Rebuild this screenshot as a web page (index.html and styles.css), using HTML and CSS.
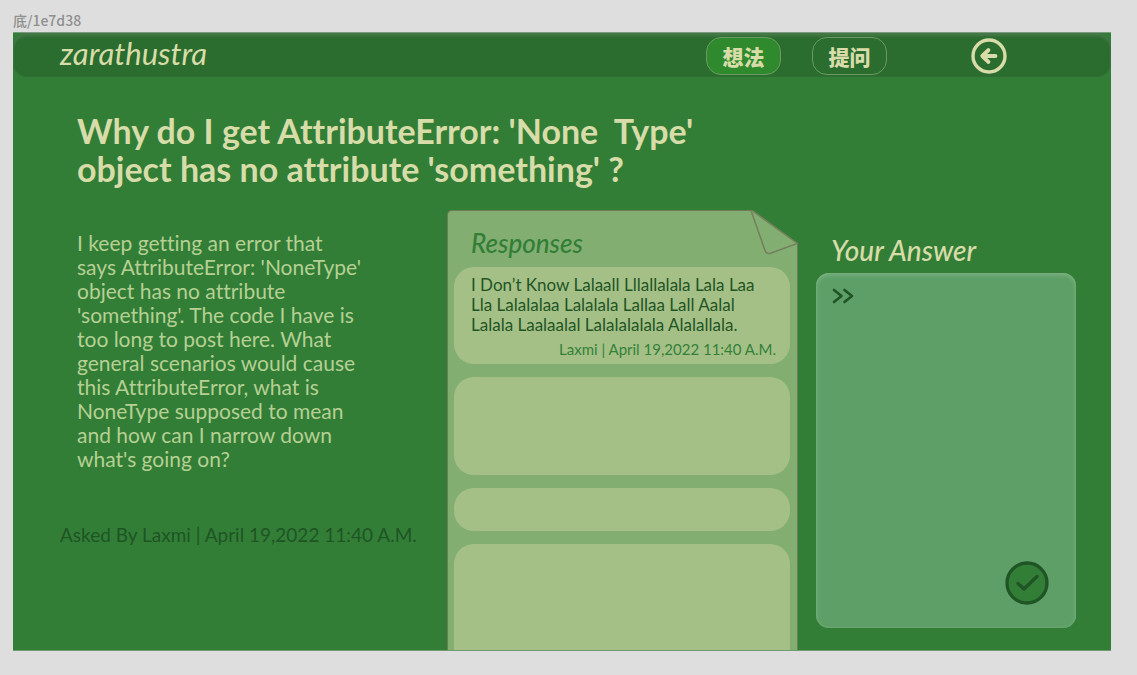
FILE: index.html
```html
<!DOCTYPE html>
<html lang="en">
<head>
<meta charset="utf-8">
<meta name="viewport" content="width=device-width, initial-scale=1">
<title>zarathustra</title>
<link rel="stylesheet" href="styles.css">
</head>
<body>
<p class="frame-label" lang="zh-CN">底/1e7d38</p>
<div class="frame">
  <header class="topbar">
    <a class="brand" href="#">zarathustra</a>
    <nav class="nav">
      <button class="pill pill-active" type="button" lang="zh-CN">想法</button>
      <button class="pill" type="button" lang="zh-CN">提问</button>
      <button class="back" type="button" aria-label="Back">
        <svg viewBox="0 0 36 36" width="36" height="36" fill="none" stroke="currentColor" stroke-width="3.4" stroke-linecap="round" stroke-linejoin="round"><circle cx="18" cy="18" r="16"/><path d="M11.500 18H24.500M17.500 12L11.200 18L17.500 24" stroke-width="3.800"/></svg>
      </button>
    </nav>
  </header>
  <main class="page">
    <h1 class="title">Why do I get AttributeError: 'None&nbsp; Type'<br>object has no attribute 'something' ?</h1>
    <div class="columns">
      <section class="question">
        <p class="question-text">I keep getting an error that<br>says AttributeError: 'NoneType'<br>object has no attribute<br>'something'. The code I have is<br>too long to post here. What<br>general scenarios would cause<br>this AttributeError, what is<br>NoneType supposed to mean<br>and how can I narrow down<br>what's going on?</p>
        <p class="question-meta">Asked By Laxmi | April 19,2022 11:40 A.M.</p>
      </section>
      <section class="paper">
        <svg class="fold" viewBox="0 0 48 46" width="48" height="46" aria-hidden="true"><path class="fold-gap" d="M2 0H48V33.500Z"/><path class="fold-line" d="M1 .5H2L47.500 33.500L20.500 43.200Q16.500 44.500 15 40.500Z"/></svg>
        <h2 class="script paper-title">Responses</h2>
        <article class="card card-text">
          <p class="response">I Don’t Know Lalaall Lllallalala Lala Laa<br>Lla Lalalalaa Lalalala Lallaa Lall Aalal<br>Lalala Laalaalal Lalalalalala Alalallala.</p>
          <p class="response-meta">Laxmi | April 19,2022 11:40 A.M.</p>
        </article>
        <article class="card card-tall"></article>
        <article class="card card-short"></article>
        <article class="card card-last"></article>
      </section>
      <form class="answer">
        <label class="script answer-title" for="answer">Your Answer</label>
        <div class="answer-box">
          <svg class="prompt" viewBox="0 0 22 16" width="22" height="16" fill="none" stroke="currentColor" stroke-width="2.600" stroke-linecap="round" stroke-linejoin="round" aria-hidden="true"><path d="M2 2L9.500 8L2 14M12.500 2L20 8L12.500 14"/></svg>
          <textarea class="answer-input" id="answer"></textarea>
          <button class="submit" type="button" aria-label="Submit answer">
            <svg viewBox="0 0 44 44" width="44" height="44" fill="none" stroke="currentColor" stroke-width="3.300" stroke-linecap="round" stroke-linejoin="round"><circle class="submit-disc" cx="22" cy="22" r="20"/><path d="M13 22.500L19 28L32 15.500"/></svg>
          </button>
        </div>
      </form>
    </div>
  </main>
</div>
</body>
</html>
```

FILE: styles.css
```css
:root {
  --green: #327e37;
  --bar: #2b6c2f;
  --cream: #d7dca8;
  --dark: #1f5425;
}

* { box-sizing: border-box; }

body {
  margin: 0;
  min-height: 100vh;
  display: flex;
  flex-direction: column;
  padding: 8px 26px 24px 13px;
  background: #dedede;
  font-family: Lato, "Noto Sans CJK SC", sans-serif;
  font-variant-ligatures: none;
}

h1, h2, p { margin: 0; }

button {
  font: inherit;
  color: inherit;
  cursor: pointer;
}

svg { display: block; }

.frame-label {
  height: 24px;
  font: 500 14px/24px "Noto Sans CJK SC", sans-serif;
  color: #8f8f8f;
}

.frame {
  flex: 1;
  display: flex;
  flex-direction: column;
  background: var(--green);
  border-top: 1px solid #7b9a7d;
  border-bottom: 1px solid #6f9a72;
}

.topbar {
  display: flex;
  align-items: center;
  justify-content: space-between;
  height: 44px;
  padding: 0 104px 0 47px;
  border-radius: 14px;
  background: var(--bar);
  box-shadow: inset 0 3px 3px #47794b, inset 0 0 2px #3c7640;
  color: var(--cream);
}

.brand {
  font-size: 31px;
  font-style: italic;
  line-height: 36px;
  padding-bottom: 4px;
  color: inherit;
  text-decoration: none;
}

.nav {
  display: flex;
  align-items: center;
  padding-top: 2px;
}

.pill {
  width: 75px;
  height: 38px;
  margin-right: 31px;
  padding: 0;
  border: 1px solid #6c9a62;
  border-radius: 15px;
  background: none;
  font: 900 21px/32px "Noto Sans CJK SC", sans-serif;
}

.pill-active {
  background: #2f8a2d;
}

.back {
  margin-left: 53px;
  padding: 0;
  border: 0;
  background: none;
}

.page {
  flex: 1;
  display: flex;
  flex-direction: column;
  padding: 35px 35px 0 47px;
}

.title {
  padding-left: 17px;
  font-size: 34px;
  font-weight: 700;
  line-height: 38px;
  color: var(--cream);
}

.columns {
  flex: 1;
  display: grid;
  grid-template-columns: 369fr 351fr 260fr;
  gap: 18px;
  padding-top: 22px;
}

.question { padding-top: 21px; }

.question-text {
  padding-left: 17px;
  font-size: 21px;
  line-height: 24px;
  color: #b6d093;
  white-space: nowrap;
}

.question-meta {
  margin-top: 52px;
  font-size: 19px;
  line-height: 24px;
  color: var(--dark);
  white-space: nowrap;
}

.script {
  font-style: italic;
  font-weight: 500;
}

.paper {
  position: relative;
  display: flex;
  flex-direction: column;
  gap: 13px;
  padding: 16px 7px 0 6px;
  border: 1px solid #6d7c57;
  border-bottom: 0;
  border-radius: 5px 0 0 0;
  background: #82ae72;
}

.fold {
  position: absolute;
  top: -1px;
  right: -1px;
}

.fold-gap { fill: var(--green); }

.fold-line {
  fill: #82ae72;
  stroke: #757f5d;
  stroke-width: 1.500px;
}

.paper-title {
  padding-left: 17px;
  font-size: 26px;
  line-height: 32px;
  color: var(--green);
  margin-bottom: -5px;
}

.card {
  border-radius: 20px;
  background: #a4c086;
}

.card-text { padding: 8px 14px 5px 17px; }
.card-tall { height: 98px; }
.card-short { height: 43px; }

.card-last {
  flex: 1;
  min-height: 105px;
  border-radius: 20px 20px 0 0;
}

.response {
  font-size: 17px;
  line-height: 20px;
  color: var(--dark);
  white-space: nowrap;
}

.response-meta {
  margin-top: 4px;
  font-size: 15px;
  line-height: 20px;
  text-align: right;
  color: #34803a;
  white-space: nowrap;
}

.answer {
  display: flex;
  flex-direction: column;
  padding: 23px 0 22px;
}

.answer-title {
  padding-left: 15px;
  font-size: 28px;
  line-height: 34px;
  color: var(--cream);
}

.answer-box {
  position: relative;
  flex: 1;
  display: flex;
  gap: 8px;
  margin-top: 6px;
  padding: 15px 16px;
  border-radius: 13px;
  background: #5e9f67;
  box-shadow: inset 0 2px 4px #7cb282, inset 0 0 2px #7cb282;
  color: var(--dark);
}

.prompt { flex: none; }

.answer-input {
  flex: 1;
  min-width: 0;
  padding: 0;
  border: 0;
  outline: 0;
  resize: none;
  background: none;
  color: inherit;
  font: 16px/20px Lato, sans-serif;
}

.submit {
  position: absolute;
  right: 27px;
  bottom: 23px;
  padding: 0;
  border: 0;
  border-radius: 50%;
  background: none;
}

.submit-disc { fill: var(--green); }
```
